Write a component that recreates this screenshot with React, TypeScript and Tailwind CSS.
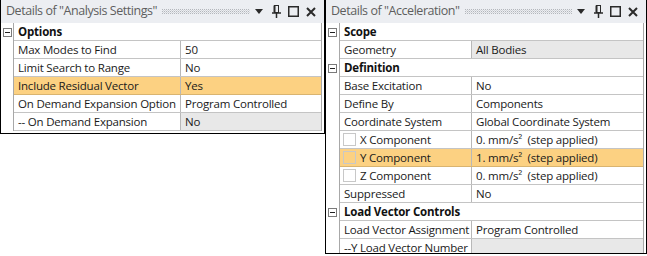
import React from "react";

type Row = {
  name: string;
  value?: React.ReactNode;
  group?: boolean;
  hi?: boolean;
  dim?: boolean;
  check?: boolean;
};

const leftRows: Row[] = [
  { name: "Options", group: true },
  { name: "Max Modes to Find", value: "50" },
  { name: "Limit Search to Range", value: "No" },
  { name: "Include Residual Vector", value: "Yes", hi: true },
  { name: "On Demand Expansion Option", value: "Program Controlled" },
  { name: "-- On Demand Expansion", value: "No", dim: true },
];

function Accel({ v }: { v: string }) {
  return <span className="whitespace-pre">{v}. mm/s²  (step applied)</span>;
}

const rightRows: Row[] = [
  { name: "Scope", group: true },
  { name: "Geometry", value: "All Bodies", dim: true },
  { name: "Definition", group: true },
  { name: "Base Excitation", value: "No" },
  { name: "Define By", value: "Components" },
  { name: "Coordinate System", value: "Global Coordinate System" },
  { name: "X Component", value: <Accel v="0" />, check: true },
  { name: "Y Component", value: <Accel v="1" />, check: true, hi: true },
  { name: "Z Component", value: <Accel v="0" />, check: true },
  { name: "Suppressed", value: "No" },
  { name: "Load Vector Controls", group: true },
  { name: "Load Vector Assignment", value: "Program Controlled" },
  { name: "--Y Load Vector Number", value: "", dim: true },
];

function MinusBox() {
  return (
    <svg width="9" height="9" viewBox="0 0 9 9" className="block">
      <rect x="0.5" y="0.5" width="8" height="8" fill="#fff" stroke="#7a7a7a" />
      <line x1="2" y1="4.5" x2="7" y2="4.5" stroke="#222" />
    </svg>
  );
}

function HeaderIcons() {
  return (
    <div className="flex items-center gap-[7px]">
      <svg width="8" height="5" viewBox="0 0 8 5">
        <path d="M0 0 H8 L4 5 Z" fill="#2a2a2a" />
      </svg>
      <svg width="9" height="13" viewBox="0 0 9 13" className="ml-[2px]">
        <rect x="2.5" y="0.5" width="4" height="7" fill="none" stroke="#2a2a2a" />
        <line x1="2.5" y1="0.5" x2="2.5" y2="7.5" stroke="#2a2a2a" strokeWidth="2" />
        <line x1="0" y1="8" x2="9" y2="8" stroke="#2a2a2a" strokeWidth="1.5" />
        <line x1="4.5" y1="8" x2="4.5" y2="13" stroke="#2a2a2a" strokeWidth="1.5" />
      </svg>
      <svg width="11" height="11" viewBox="0 0 11 11">
        <rect x="0.75" y="0.75" width="9.5" height="9.5" fill="none" stroke="#2a2a2a" strokeWidth="1.5" />
      </svg>
      <svg width="10" height="10" viewBox="0 0 10 10">
        <path d="M1 1 L9 9 M9 1 L1 9" stroke="#2a2a2a" strokeWidth="2" />
      </svg>
    </div>
  );
}

function Dots() {
  return (
    <svg className="flex-1 h-[5px] mx-[5px]" height="5">
      <defs>
        <pattern id="dots" width="2" height="2" patternUnits="userSpaceOnUse">
          <rect x="0" y="0" width="1" height="1" fill="#b4b7bc" />
          <rect x="1" y="1" width="1" height="1" fill="#d3d5d9" />
        </pattern>
      </defs>
      <rect width="100%" height="5" fill="url(#dots)" />
    </svg>
  );
}

function Panel({
  title,
  rows,
  gutter,
  nameW,
}: {
  title: string;
  rows: Row[];
  gutter: string;
  nameW: string;
}) {
  return (
    <>
      <div className="h-[23px] bg-[#eceef2] flex items-center pl-[5px] pr-[8px]">
        <span className="text-[12.5px] tracking-[-0.45px] text-[#5e5e5e] whitespace-nowrap">{title}</span>
        <Dots />
        <HeaderIcons />
      </div>
      <div className="mr-[2px] border-r border-[#a8a8a8] bg-white">
        {rows.map((r, i) => (
          <div key={i} className="flex h-[18px]">
            <div className={`${gutter} shrink-0 border-r border-[#a8a8a8] flex items-center justify-center`}>
              {r.group && <MinusBox />}
            </div>
            {r.group ? (
              <div className="flex-1 border-b border-[#c4c4c4] flex items-center pl-[4px] font-bold text-[#111]">
                {r.name}
              </div>
            ) : (
              <div className={`flex-1 flex border-b ${r.hi ? "bg-[#fcd182] border-[#d9b470]" : "border-[#c4c4c4]"}`}>
                <div className={`${nameW} shrink-0 border-r border-[#b8b8b8] flex items-center pl-[3px] whitespace-nowrap overflow-hidden`}>
                  {r.check && (
                    <span className={`w-[13px] h-[13px] shrink-0 border border-[#c8c8c8] mr-[4px] ${r.hi ? "" : "bg-white"}`} />
                  )}
                  <span className={r.check ? "" : "pl-[1px]"}>{r.name}</span>
                </div>
                <div className={`flex-1 flex items-center pl-[4px] whitespace-nowrap ${r.dim ? "bg-[#e8e8e8]" : ""}`}>
                  {r.value}
                </div>
              </div>
            )}
          </div>
        ))}
      </div>
    </>
  );
}

export default function App() {
  return (
    <div
      className="w-[647px] h-[256px] bg-white flex items-start text-[11.5px] tracking-[-0.2px] text-[#1a1a1a] overflow-hidden"
      style={{ fontFamily: '"Open Sans", "Noto Sans", sans-serif' }}
    >
      <div className="w-[325px] h-[134px] shrink-0 border-l border-r border-b border-black overflow-hidden">
        <Panel title={'Details of "Analysis Settings"'} rows={leftRows} gutter="w-[13px]" nameW="w-[167px]" />
      </div>
      <div className="w-[322px] h-[254px] shrink-0 border-l border-r border-b border-black overflow-hidden">
        <Panel title={'Details of "Acceleration"'} rows={rightRows} gutter="w-[14px]" nameW="w-[132px]" />
      </div>
    </div>
  );
}
